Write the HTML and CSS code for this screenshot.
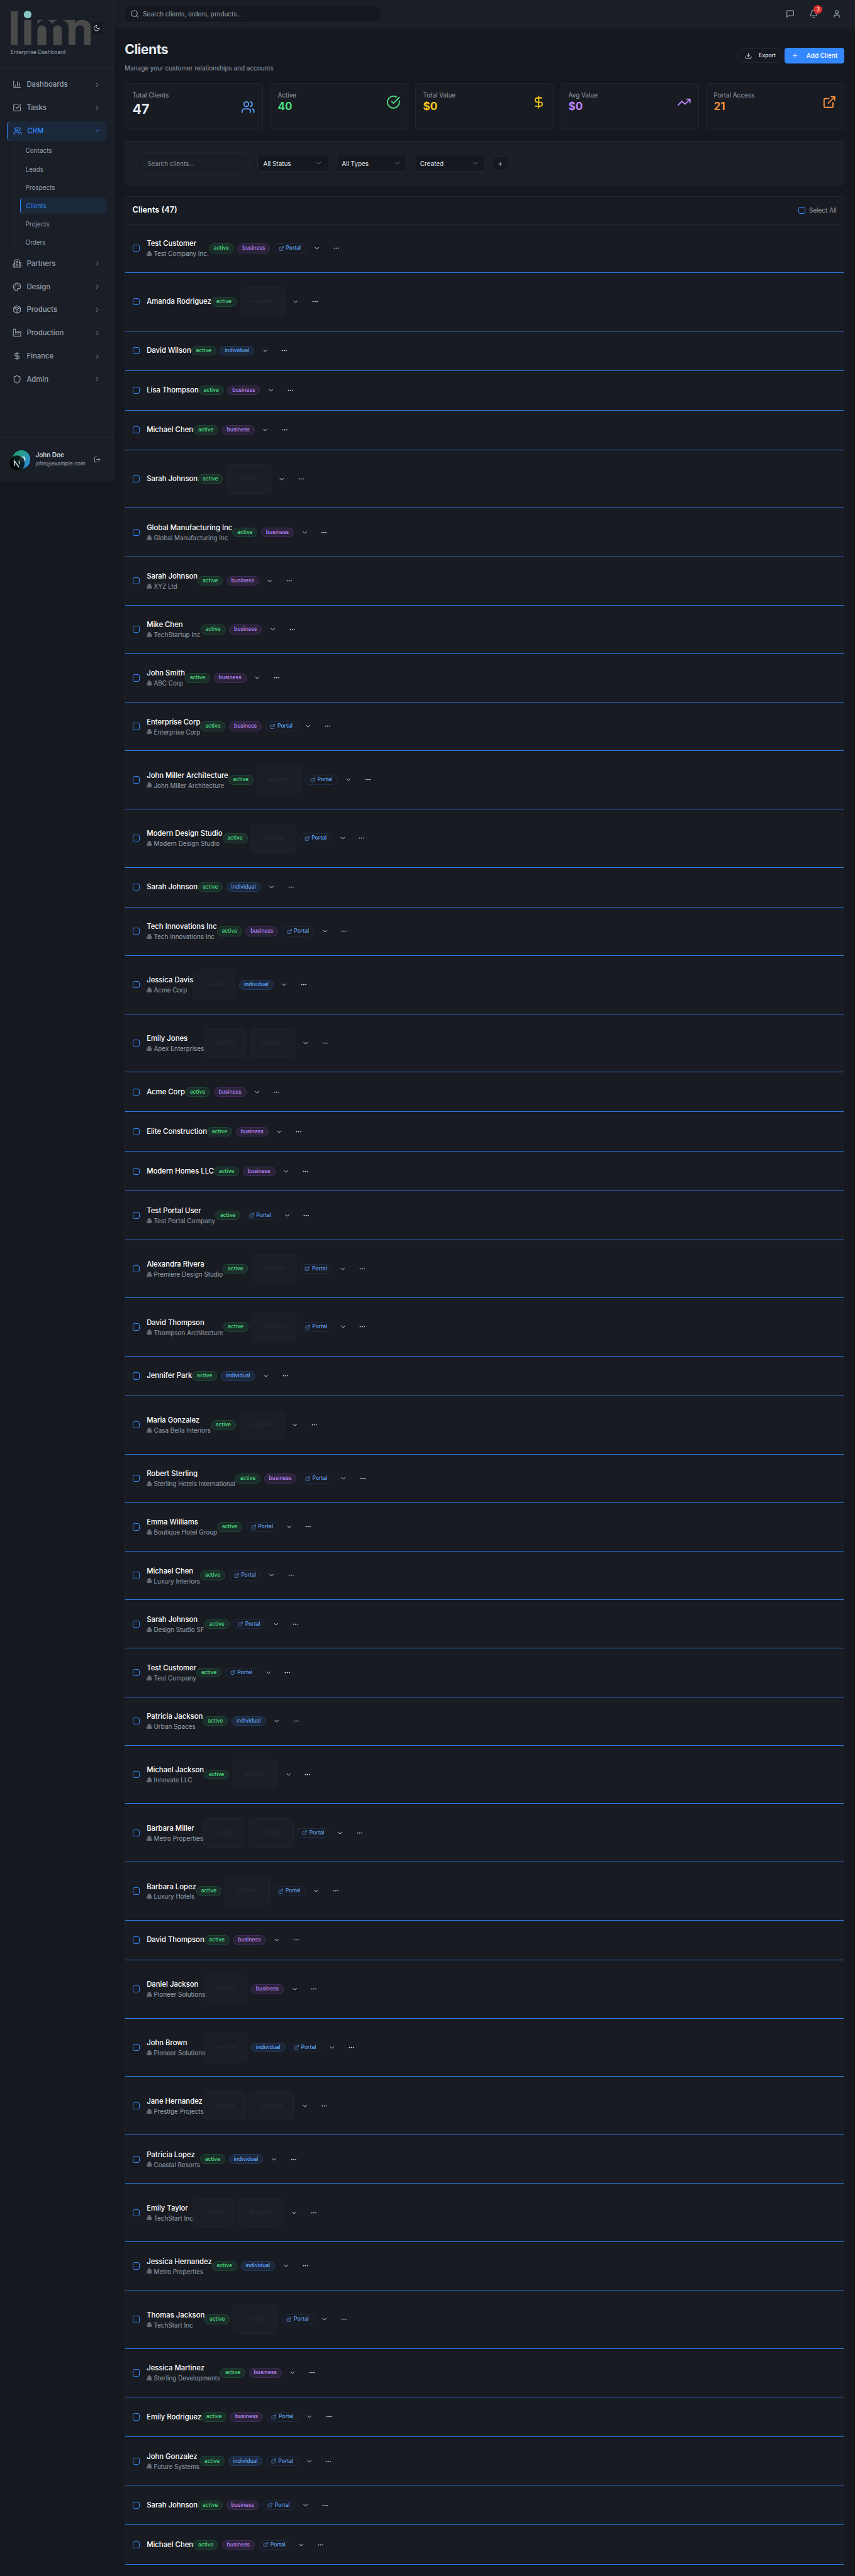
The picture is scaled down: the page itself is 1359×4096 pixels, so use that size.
FILE: index.html
```html
<!DOCTYPE html>
<html lang="en">
<head>
<meta charset="utf-8">
<title>Clients</title>
<link rel="stylesheet" href="styles.css">
</head>
<body>
<svg class="sprite" aria-hidden="true">
  <symbol id="chart" viewBox="0 0 24 24"><path d="M3 3v16a2 2 0 0 0 2 2h16M8 17v-3M13 17V5M18 17V9"/></symbol>
  <symbol id="tasks" viewBox="0 0 24 24"><path d="M21 10.5V19a2 2 0 0 1-2 2H5a2 2 0 0 1-2-2V5a2 2 0 0 1 2-2h12.5M9 11l3 3L22 4"/></symbol>
  <symbol id="users" viewBox="0 0 24 24"><path d="M16 21v-2a4 4 0 0 0-4-4H6a4 4 0 0 0-4 4v2M22 21v-2a4 4 0 0 0-3-3.87M16 3.13a4 4 0 0 1 0 7.75"/><circle cx="9" cy="7" r="4"/></symbol>
  <symbol id="building" viewBox="0 0 24 24"><path d="M6 22V4a2 2 0 0 1 2-2h8a2 2 0 0 1 2 2v18ZM6 12H4a2 2 0 0 0-2 2v6a2 2 0 0 0 2 2h2M18 9h2a2 2 0 0 1 2 2v9a2 2 0 0 1-2 2h-2M10 6h4M10 10h4M10 14h4M10 18h4"/></symbol>
  <symbol id="palette" viewBox="0 0 24 24"><path d="M12 2C6.5 2 2 6.5 2 12s4.500 10 10 10c.926 0 1.648-.746 1.648-1.688 0-.437-.18-.835-.437-1.125-.29-.289-.438-.652-.438-1.125a1.640 1.640 0 0 1 1.668-1.668h1.996c3.051 0 5.555-2.503 5.555-5.554C21.965 6.012 17.461 2 12 2z"/><circle cx="13.500" cy="6.500" r=".5"/><circle cx="17.500" cy="10.500" r=".5"/><circle cx="8.500" cy="7.500" r=".5"/><circle cx="6.500" cy="12.500" r=".5"/></symbol>
  <symbol id="box" viewBox="0 0 24 24"><path d="M11 21.730a2 2 0 0 0 2 0l7-4A2 2 0 0 0 21 16V8a2 2 0 0 0-1-1.730l-7-4a2 2 0 0 0-2 0l-7 4A2 2 0 0 0 3 8v8a2 2 0 0 0 1 1.730zM12 22V12M3.300 7 12 12l8.700-5M7.500 4.270l9 5.150"/></symbol>
  <symbol id="factory" viewBox="0 0 24 24"><path d="M2 20a2 2 0 0 0 2 2h16a2 2 0 0 0 2-2V8l-7 5V8l-7 5V4a2 2 0 0 0-2-2H4a2 2 0 0 0-2 2ZM17 18h1M12 18h1M7 18h1"/></symbol>
  <symbol id="dollar" viewBox="0 0 24 24"><path d="M12 2v20M17 5H9.500a3.500 3.500 0 0 0 0 7h5a3.500 3.500 0 0 1 0 7H6"/></symbol>
  <symbol id="shield" viewBox="0 0 24 24"><path d="M20 13c0 5-3.500 7.500-7.660 8.950a1 1 0 0 1-.67-.01C7.500 20.500 4 18 4 13V6a1 1 0 0 1 1-1c2 0 4.500-1.200 6.240-2.720a1.170 1.170 0 0 1 1.520 0C14.510 3.810 17 5 19 5a1 1 0 0 1 1 1z"/></symbol>
  <symbol id="right" viewBox="0 0 24 24"><path d="m9 18 6-6-6-6"/></symbol>
  <symbol id="down" viewBox="0 0 24 24"><path d="m6 9 6 6 6-6"/></symbol>
  <symbol id="moon" viewBox="0 0 24 24"><path d="M12 3a6 6 0 0 0 9 9 9 9 0 1 1-9-9Z"/></symbol>
  <symbol id="search" viewBox="0 0 24 24"><circle cx="11" cy="11" r="8"/><path d="m21 21-4.300-4.300"/></symbol>
  <symbol id="message" viewBox="0 0 24 24"><path d="M21 15a2 2 0 0 1-2 2H7l-4 4V5a2 2 0 0 1 2-2h14a2 2 0 0 1 2 2z"/></symbol>
  <symbol id="bell" viewBox="0 0 24 24"><path d="M10.268 21a2 2 0 0 0 3.464 0M3.262 15.326A1 1 0 0 0 4 17h16a1 1 0 0 0 .74-1.673C19.410 13.956 18 12.499 18 8A6 6 0 0 0 6 8c0 4.499-1.411 5.956-2.738 7.326"/></symbol>
  <symbol id="user" viewBox="0 0 24 24"><circle cx="12" cy="7" r="4"/><path d="M19 21v-2a4 4 0 0 0-4-4H9a4 4 0 0 0-4 4v2"/></symbol>
  <symbol id="download" viewBox="0 0 24 24"><path d="M21 15v4a2 2 0 0 1-2 2H5a2 2 0 0 1-2-2v-4M7 10l5 5 5-5M12 15V3"/></symbol>
  <symbol id="plus" viewBox="0 0 24 24"><path d="M5 12h14M12 5v14"/></symbol>
  <symbol id="check" viewBox="0 0 24 24"><path d="M21.801 10A10 10 0 1 1 17 3.335M9 11l3 3L22 4"/></symbol>
  <symbol id="trend" viewBox="0 0 24 24"><path d="M16 7h6v6M22 7l-8.500 8.500-5-5L2 17"/></symbol>
  <symbol id="external" viewBox="0 0 24 24"><path d="M15 3h6v6M10 14 21 3M18 13v6a2 2 0 0 1-2 2H5a2 2 0 0 1-2-2V8a2 2 0 0 1 2-2h6"/></symbol>
  <symbol id="arrow" viewBox="0 0 24 24"><path d="M12 5v14M19 12l-7 7-7-7"/></symbol>
  <symbol id="logout" viewBox="0 0 24 24"><path d="M9 21H5a2 2 0 0 1-2-2V5a2 2 0 0 1 2-2h4M16 17l5-5-5-5M21 12H9"/></symbol>
  <symbol id="dots" viewBox="0 0 24 24"><circle cx="12" cy="12" r="1"/><circle cx="19" cy="12" r="1"/><circle cx="5" cy="12" r="1"/></symbol>
</svg>
<div class="app">
  <aside class="sidebar">
    <div class="brand">
      <div class="brand-row">
        <svg class="logo" viewBox="42 42 540 231" preserveAspectRatio="none" aria-label="limn">
          <rect x="42" y="45" width="47" height="228"/><rect x="133" y="105" width="47" height="168"/>
          <circle class="logo-dot" cx="156" cy="68" r="26"/>
          <path d="M222 105H268Q240 108 222 135ZM286 105H360Q336 110 322 132Q308 110 286 105ZM222 273V170a30 30 0 0 1 60 0V273ZM328 273V170a29.500 30 0 0 1 59 0V273ZM386 105H476V128Q490 105 525 105C565 105 582 130 582 165V273H537V172Q537 140 507 140Q478 140 478 172V273H432V155Q430 112 386 105Z"/>
        </svg>
        <button class="theme"><svg class="icon i16"><use href="#moon"/></svg></button>
      </div>
      <div class="tagline">Enterprise Dashboard</div>
    </div>
    <nav class="nav">
      <a class="nav-item"><svg class="icon i20"><use href="#chart"/></svg><span>Dashboards</span><svg class="icon i16"><use href="#right"/></svg></a>
      <a class="nav-item"><svg class="icon i20"><use href="#tasks"/></svg><span>Tasks</span><svg class="icon i16"><use href="#right"/></svg></a>
      <div class="nav-group">
        <a class="nav-item nav-item--active"><svg class="icon i20"><use href="#users"/></svg><span>CRM</span><svg class="icon i16"><use href="#down"/></svg></a>
        <div class="subnav">
          <a class="sub-item">Contacts</a><a class="sub-item">Leads</a><a class="sub-item">Prospects</a><a class="sub-item sub-item--active">Clients</a><a class="sub-item">Projects</a><a class="sub-item">Orders</a>
        </div>
      </div>
      <a class="nav-item"><svg class="icon i20"><use href="#building"/></svg><span>Partners</span><svg class="icon i16"><use href="#right"/></svg></a>
      <a class="nav-item"><svg class="icon i20"><use href="#palette"/></svg><span>Design</span><svg class="icon i16"><use href="#right"/></svg></a>
      <a class="nav-item"><svg class="icon i20"><use href="#box"/></svg><span>Products</span><svg class="icon i16"><use href="#right"/></svg></a>
      <a class="nav-item"><svg class="icon i20"><use href="#factory"/></svg><span>Production</span><svg class="icon i16"><use href="#right"/></svg></a>
      <a class="nav-item"><svg class="icon i20"><use href="#dollar"/></svg><span>Finance</span><svg class="icon i16"><use href="#right"/></svg></a>
      <a class="nav-item"><svg class="icon i20"><use href="#shield"/></svg><span>Admin</span><svg class="icon i16"><use href="#right"/></svg></a>
    </nav>
    <div class="account">
      <div class="avatar">JD
        <svg class="dev-badge" viewBox="0 0 36 36"><circle cx="18" cy="18" r="17.500"/><path d="M12.500 23.500V12.500L23 26.500M23.200 12.500v7.500"/></svg>
      </div>
      <div class="who"><div class="who-name">John Doe</div><div class="who-mail">john@example.com</div></div>
      <svg class="icon i16"><use href="#logout"/></svg>
    </div>
  </aside>
  <div class="page">
    <header class="topbar">
      <div class="global-search"><svg class="icon i20"><use href="#search"/></svg><span>Search clients, orders, products...</span></div>
      <div class="top-actions">
        <svg class="icon i20"><use href="#message"/></svg>
        <div class="bell"><svg class="icon i20"><use href="#bell"/></svg><span class="count">3</span></div>
        <svg class="icon i20"><use href="#user"/></svg>
      </div>
    </header>
    <main class="main">
      <div class="heading">
        <div><h1>Clients</h1><p>Manage your customer relationships and accounts</p></div>
        <div class="heading-actions">
          <button class="btn btn--export"><svg class="icon i16"><use href="#download"/></svg>Export</button>
          <button class="btn btn--add"><svg class="icon i16"><use href="#plus"/></svg>Add Client</button>
        </div>
      </div>
      <section class="stats">
        <div class="stat stat--big"><div><div class="stat-label">Total Clients</div><div class="stat-value">47</div></div><svg class="icon i32 blue"><use href="#users"/></svg></div>
        <div class="stat green"><div><div class="stat-label">Active</div><div class="stat-value">40</div></div><svg class="icon i32"><use href="#check"/></svg></div>
        <div class="stat yellow"><div><div class="stat-label">Total Value</div><div class="stat-value">$0</div></div><svg class="icon i32"><use href="#dollar"/></svg></div>
        <div class="stat purple"><div><div class="stat-label">Avg Value</div><div class="stat-value">$0</div></div><svg class="icon i32"><use href="#trend"/></svg></div>
        <div class="stat orange"><div><div class="stat-label">Portal Access</div><div class="stat-value">21</div></div><svg class="icon i32"><use href="#external"/></svg></div>
      </section>
      <section class="filters">
        <div class="filter-search"><i class="ghost-dot"></i><span>Search clients...</span></div>
        <div class="select"><span>All Status</span><svg class="icon i16"><use href="#down"/></svg></div>
        <div class="select"><span>All Types</span><svg class="icon i16"><use href="#down"/></svg></div>
        <div class="select"><span>Created</span><svg class="icon i16"><use href="#down"/></svg></div>
        <button class="sort"><svg class="icon i12"><use href="#arrow"/></svg></button>
      </section>
      <section class="list">
        <div class="list-head"><h2>Clients (47)</h2><label><i class="checkbox"></i>Select All</label></div>
        <div class="row row--two"><i class="checkbox"></i><div class="info"><b>Test Customer</b><small><svg class="firm"><use href="#building"/></svg>Test Company Inc.</small></div><div class="tags"><span class="tag tag--active">active</span><span class="tag tag--business">business</span><span class="tag tag--portal"><svg class="icon i12"><use href="#external"/></svg>Portal</span></div><svg class="icon i16 act"><use href="#down"/></svg><svg class="icon i16 act"><use href="#dots"/></svg></div>
        <div class="row row--tall"><i class="checkbox"></i><div class="info"><b>Amanda Rodriguez</b></div><div class="tags"><span class="tag tag--active">active</span><span class="tag tag--plain">architect</span></div><svg class="icon i16 act"><use href="#down"/></svg><svg class="icon i16 act"><use href="#dots"/></svg></div>
        <div class="row"><i class="checkbox"></i><div class="info"><b>David Wilson</b></div><div class="tags"><span class="tag tag--active">active</span><span class="tag tag--individual">individual</span></div><svg class="icon i16 act"><use href="#down"/></svg><svg class="icon i16 act"><use href="#dots"/></svg></div>
        <div class="row"><i class="checkbox"></i><div class="info"><b>Lisa Thompson</b></div><div class="tags"><span class="tag tag--active">active</span><span class="tag tag--business">business</span></div><svg class="icon i16 act"><use href="#down"/></svg><svg class="icon i16 act"><use href="#dots"/></svg></div>
        <div class="row"><i class="checkbox"></i><div class="info"><b>Michael Chen</b></div><div class="tags"><span class="tag tag--active">active</span><span class="tag tag--business">business</span></div><svg class="icon i16 act"><use href="#down"/></svg><svg class="icon i16 act"><use href="#dots"/></svg></div>
        <div class="row row--tall"><i class="checkbox"></i><div class="info"><b>Sarah Johnson</b></div><div class="tags"><span class="tag tag--active">active</span><span class="tag tag--plain">designer</span></div><svg class="icon i16 act"><use href="#down"/></svg><svg class="icon i16 act"><use href="#dots"/></svg></div>
        <div class="row row--two"><i class="checkbox"></i><div class="info"><b>Global Manufacturing Inc</b><small><svg class="firm"><use href="#building"/></svg>Global Manufacturing Inc</small></div><div class="tags"><span class="tag tag--active">active</span><span class="tag tag--business">business</span></div><svg class="icon i16 act"><use href="#down"/></svg><svg class="icon i16 act"><use href="#dots"/></svg></div>
        <div class="row row--two"><i class="checkbox"></i><div class="info"><b>Sarah Johnson</b><small><svg class="firm"><use href="#building"/></svg>XYZ Ltd</small></div><div class="tags"><span class="tag tag--active">active</span><span class="tag tag--business">business</span></div><svg class="icon i16 act"><use href="#down"/></svg><svg class="icon i16 act"><use href="#dots"/></svg></div>
        <div class="row row--two"><i class="checkbox"></i><div class="info"><b>Mike Chen</b><small><svg class="firm"><use href="#building"/></svg>TechStartup Inc</small></div><div class="tags"><span class="tag tag--active">active</span><span class="tag tag--business">business</span></div><svg class="icon i16 act"><use href="#down"/></svg><svg class="icon i16 act"><use href="#dots"/></svg></div>
        <div class="row row--two"><i class="checkbox"></i><div class="info"><b>John Smith</b><small><svg class="firm"><use href="#building"/></svg>ABC Corp</small></div><div class="tags"><span class="tag tag--active">active</span><span class="tag tag--business">business</span></div><svg class="icon i16 act"><use href="#down"/></svg><svg class="icon i16 act"><use href="#dots"/></svg></div>
        <div class="row row--two"><i class="checkbox"></i><div class="info"><b>Enterprise Corp</b><small><svg class="firm"><use href="#building"/></svg>Enterprise Corp</small></div><div class="tags"><span class="tag tag--active">active</span><span class="tag tag--business">business</span><span class="tag tag--portal"><svg class="icon i12"><use href="#external"/></svg>Portal</span></div><svg class="icon i16 act"><use href="#down"/></svg><svg class="icon i16 act"><use href="#dots"/></svg></div>
        <div class="row row--tall"><i class="checkbox"></i><div class="info"><b>John Miller Architecture</b><small><svg class="firm"><use href="#building"/></svg>John Miller Architecture</small></div><div class="tags"><span class="tag tag--active">active</span><span class="tag tag--plain">architect</span><span class="tag tag--portal"><svg class="icon i12"><use href="#external"/></svg>Portal</span></div><svg class="icon i16 act"><use href="#down"/></svg><svg class="icon i16 act"><use href="#dots"/></svg></div>
        <div class="row row--tall"><i class="checkbox"></i><div class="info"><b>Modern Design Studio</b><small><svg class="firm"><use href="#building"/></svg>Modern Design Studio</small></div><div class="tags"><span class="tag tag--active">active</span><span class="tag tag--plain">designer</span><span class="tag tag--portal"><svg class="icon i12"><use href="#external"/></svg>Portal</span></div><svg class="icon i16 act"><use href="#down"/></svg><svg class="icon i16 act"><use href="#dots"/></svg></div>
        <div class="row"><i class="checkbox"></i><div class="info"><b>Sarah Johnson</b></div><div class="tags"><span class="tag tag--active">active</span><span class="tag tag--individual">individual</span></div><svg class="icon i16 act"><use href="#down"/></svg><svg class="icon i16 act"><use href="#dots"/></svg></div>
        <div class="row row--two"><i class="checkbox"></i><div class="info"><b>Tech Innovations Inc</b><small><svg class="firm"><use href="#building"/></svg>Tech Innovations Inc</small></div><div class="tags"><span class="tag tag--active">active</span><span class="tag tag--business">business</span><span class="tag tag--portal"><svg class="icon i12"><use href="#external"/></svg>Portal</span></div><svg class="icon i16 act"><use href="#down"/></svg><svg class="icon i16 act"><use href="#dots"/></svg></div>
        <div class="row row--tall"><i class="checkbox"></i><div class="info"><b>Jessica Davis</b><small><svg class="firm"><use href="#building"/></svg>Acme Corp</small></div><div class="tags"><span class="tag tag--plain">inactive</span><span class="tag tag--individual">individual</span></div><svg class="icon i16 act"><use href="#down"/></svg><svg class="icon i16 act"><use href="#dots"/></svg></div>
        <div class="row row--tall"><i class="checkbox"></i><div class="info"><b>Emily Jones</b><small><svg class="firm"><use href="#building"/></svg>Apex Enterprises</small></div><div class="tags"><span class="tag tag--plain">inactive</span><span class="tag tag--plain">architect</span></div><svg class="icon i16 act"><use href="#down"/></svg><svg class="icon i16 act"><use href="#dots"/></svg></div>
        <div class="row"><i class="checkbox"></i><div class="info"><b>Acme Corp</b></div><div class="tags"><span class="tag tag--active">active</span><span class="tag tag--business">business</span></div><svg class="icon i16 act"><use href="#down"/></svg><svg class="icon i16 act"><use href="#dots"/></svg></div>
        <div class="row"><i class="checkbox"></i><div class="info"><b>Elite Construction</b></div><div class="tags"><span class="tag tag--active">active</span><span class="tag tag--business">business</span></div><svg class="icon i16 act"><use href="#down"/></svg><svg class="icon i16 act"><use href="#dots"/></svg></div>
        <div class="row"><i class="checkbox"></i><div class="info"><b>Modern Homes LLC</b></div><div class="tags"><span class="tag tag--active">active</span><span class="tag tag--business">business</span></div><svg class="icon i16 act"><use href="#down"/></svg><svg class="icon i16 act"><use href="#dots"/></svg></div>
        <div class="row row--two"><i class="checkbox"></i><div class="info"><b>Test Portal User</b><small><svg class="firm"><use href="#building"/></svg>Test Portal Company</small></div><div class="tags"><span class="tag tag--active">active</span><span class="tag tag--portal"><svg class="icon i12"><use href="#external"/></svg>Portal</span></div><svg class="icon i16 act"><use href="#down"/></svg><svg class="icon i16 act"><use href="#dots"/></svg></div>
        <div class="row row--tall"><i class="checkbox"></i><div class="info"><b>Alexandra Rivera</b><small><svg class="firm"><use href="#building"/></svg>Premiere Design Studio</small></div><div class="tags"><span class="tag tag--active">active</span><span class="tag tag--plain">designer</span><span class="tag tag--portal"><svg class="icon i12"><use href="#external"/></svg>Portal</span></div><svg class="icon i16 act"><use href="#down"/></svg><svg class="icon i16 act"><use href="#dots"/></svg></div>
        <div class="row row--tall"><i class="checkbox"></i><div class="info"><b>David Thompson</b><small><svg class="firm"><use href="#building"/></svg>Thompson Architecture</small></div><div class="tags"><span class="tag tag--active">active</span><span class="tag tag--plain">architect</span><span class="tag tag--portal"><svg class="icon i12"><use href="#external"/></svg>Portal</span></div><svg class="icon i16 act"><use href="#down"/></svg><svg class="icon i16 act"><use href="#dots"/></svg></div>
        <div class="row"><i class="checkbox"></i><div class="info"><b>Jennifer Park</b></div><div class="tags"><span class="tag tag--active">active</span><span class="tag tag--individual">individual</span></div><svg class="icon i16 act"><use href="#down"/></svg><svg class="icon i16 act"><use href="#dots"/></svg></div>
        <div class="row row--tall"><i class="checkbox"></i><div class="info"><b>Maria Gonzalez</b><small><svg class="firm"><use href="#building"/></svg>Casa Bella Interiors</small></div><div class="tags"><span class="tag tag--active">active</span><span class="tag tag--plain">designer</span></div><svg class="icon i16 act"><use href="#down"/></svg><svg class="icon i16 act"><use href="#dots"/></svg></div>
        <div class="row row--two"><i class="checkbox"></i><div class="info"><b>Robert Sterling</b><small><svg class="firm"><use href="#building"/></svg>Sterling Hotels International</small></div><div class="tags"><span class="tag tag--active">active</span><span class="tag tag--business">business</span><span class="tag tag--portal"><svg class="icon i12"><use href="#external"/></svg>Portal</span></div><svg class="icon i16 act"><use href="#down"/></svg><svg class="icon i16 act"><use href="#dots"/></svg></div>
        <div class="row row--two"><i class="checkbox"></i><div class="info"><b>Emma Williams</b><small><svg class="firm"><use href="#building"/></svg>Boutique Hotel Group</small></div><div class="tags"><span class="tag tag--active">active</span><span class="tag tag--portal"><svg class="icon i12"><use href="#external"/></svg>Portal</span></div><svg class="icon i16 act"><use href="#down"/></svg><svg class="icon i16 act"><use href="#dots"/></svg></div>
        <div class="row row--two"><i class="checkbox"></i><div class="info"><b>Michael Chen</b><small><svg class="firm"><use href="#building"/></svg>Luxury Interiors</small></div><div class="tags"><span class="tag tag--active">active</span><span class="tag tag--portal"><svg class="icon i12"><use href="#external"/></svg>Portal</span></div><svg class="icon i16 act"><use href="#down"/></svg><svg class="icon i16 act"><use href="#dots"/></svg></div>
        <div class="row row--two"><i class="checkbox"></i><div class="info"><b>Sarah Johnson</b><small><svg class="firm"><use href="#building"/></svg>Design Studio SF</small></div><div class="tags"><span class="tag tag--active">active</span><span class="tag tag--portal"><svg class="icon i12"><use href="#external"/></svg>Portal</span></div><svg class="icon i16 act"><use href="#down"/></svg><svg class="icon i16 act"><use href="#dots"/></svg></div>
        <div class="row row--two"><i class="checkbox"></i><div class="info"><b>Test Customer</b><small><svg class="firm"><use href="#building"/></svg>Test Company</small></div><div class="tags"><span class="tag tag--active">active</span><span class="tag tag--portal"><svg class="icon i12"><use href="#external"/></svg>Portal</span></div><svg class="icon i16 act"><use href="#down"/></svg><svg class="icon i16 act"><use href="#dots"/></svg></div>
        <div class="row row--two"><i class="checkbox"></i><div class="info"><b>Patricia Jackson</b><small><svg class="firm"><use href="#building"/></svg>Urban Spaces</small></div><div class="tags"><span class="tag tag--active">active</span><span class="tag tag--individual">individual</span></div><svg class="icon i16 act"><use href="#down"/></svg><svg class="icon i16 act"><use href="#dots"/></svg></div>
        <div class="row row--tall"><i class="checkbox"></i><div class="info"><b>Michael Jackson</b><small><svg class="firm"><use href="#building"/></svg>Innovate LLC</small></div><div class="tags"><span class="tag tag--active">active</span><span class="tag tag--plain">architect</span></div><svg class="icon i16 act"><use href="#down"/></svg><svg class="icon i16 act"><use href="#dots"/></svg></div>
        <div class="row row--tall"><i class="checkbox"></i><div class="info"><b>Barbara Miller</b><small><svg class="firm"><use href="#building"/></svg>Metro Properties</small></div><div class="tags"><span class="tag tag--plain">inactive</span><span class="tag tag--plain">designer</span><span class="tag tag--portal"><svg class="icon i12"><use href="#external"/></svg>Portal</span></div><svg class="icon i16 act"><use href="#down"/></svg><svg class="icon i16 act"><use href="#dots"/></svg></div>
        <div class="row row--tall"><i class="checkbox"></i><div class="info"><b>Barbara Lopez</b><small><svg class="firm"><use href="#building"/></svg>Luxury Hotels</small></div><div class="tags"><span class="tag tag--active">active</span><span class="tag tag--plain">architect</span><span class="tag tag--portal"><svg class="icon i12"><use href="#external"/></svg>Portal</span></div><svg class="icon i16 act"><use href="#down"/></svg><svg class="icon i16 act"><use href="#dots"/></svg></div>
        <div class="row"><i class="checkbox"></i><div class="info"><b>David Thompson</b></div><div class="tags"><span class="tag tag--active">active</span><span class="tag tag--business">business</span></div><svg class="icon i16 act"><use href="#down"/></svg><svg class="icon i16 act"><use href="#dots"/></svg></div>
        <div class="row row--tall"><i class="checkbox"></i><div class="info"><b>Daniel Jackson</b><small><svg class="firm"><use href="#building"/></svg>Pioneer Solutions</small></div><div class="tags"><span class="tag tag--plain">inactive</span><span class="tag tag--business">business</span></div><svg class="icon i16 act"><use href="#down"/></svg><svg class="icon i16 act"><use href="#dots"/></svg></div>
        <div class="row row--tall"><i class="checkbox"></i><div class="info"><b>John Brown</b><small><svg class="firm"><use href="#building"/></svg>Pioneer Solutions</small></div><div class="tags"><span class="tag tag--plain">inactive</span><span class="tag tag--individual">individual</span><span class="tag tag--portal"><svg class="icon i12"><use href="#external"/></svg>Portal</span></div><svg class="icon i16 act"><use href="#down"/></svg><svg class="icon i16 act"><use href="#dots"/></svg></div>
        <div class="row row--tall"><i class="checkbox"></i><div class="info"><b>Jane Hernandez</b><small><svg class="firm"><use href="#building"/></svg>Prestige Projects</small></div><div class="tags"><span class="tag tag--plain">inactive</span><span class="tag tag--plain">architect</span></div><svg class="icon i16 act"><use href="#down"/></svg><svg class="icon i16 act"><use href="#dots"/></svg></div>
        <div class="row row--two"><i class="checkbox"></i><div class="info"><b>Patricia Lopez</b><small><svg class="firm"><use href="#building"/></svg>Coastal Resorts</small></div><div class="tags"><span class="tag tag--active">active</span><span class="tag tag--individual">individual</span></div><svg class="icon i16 act"><use href="#down"/></svg><svg class="icon i16 act"><use href="#dots"/></svg></div>
        <div class="row row--tall"><i class="checkbox"></i><div class="info"><b>Emily Taylor</b><small><svg class="firm"><use href="#building"/></svg>TechStart Inc</small></div><div class="tags"><span class="tag tag--plain">inactive</span><span class="tag tag--plain">designer</span></div><svg class="icon i16 act"><use href="#down"/></svg><svg class="icon i16 act"><use href="#dots"/></svg></div>
        <div class="row row--two"><i class="checkbox"></i><div class="info"><b>Jessica Hernandez</b><small><svg class="firm"><use href="#building"/></svg>Metro Properties</small></div><div class="tags"><span class="tag tag--active">active</span><span class="tag tag--individual">individual</span></div><svg class="icon i16 act"><use href="#down"/></svg><svg class="icon i16 act"><use href="#dots"/></svg></div>
        <div class="row row--tall"><i class="checkbox"></i><div class="info"><b>Thomas Jackson</b><small><svg class="firm"><use href="#building"/></svg>TechStart Inc</small></div><div class="tags"><span class="tag tag--active">active</span><span class="tag tag--plain">architect</span><span class="tag tag--portal"><svg class="icon i12"><use href="#external"/></svg>Portal</span></div><svg class="icon i16 act"><use href="#down"/></svg><svg class="icon i16 act"><use href="#dots"/></svg></div>
        <div class="row row--two"><i class="checkbox"></i><div class="info"><b>Jessica Martinez</b><small><svg class="firm"><use href="#building"/></svg>Sterling Developments</small></div><div class="tags"><span class="tag tag--active">active</span><span class="tag tag--business">business</span></div><svg class="icon i16 act"><use href="#down"/></svg><svg class="icon i16 act"><use href="#dots"/></svg></div>
        <div class="row"><i class="checkbox"></i><div class="info"><b>Emily Rodriguez</b></div><div class="tags"><span class="tag tag--active">active</span><span class="tag tag--business">business</span><span class="tag tag--portal"><svg class="icon i12"><use href="#external"/></svg>Portal</span></div><svg class="icon i16 act"><use href="#down"/></svg><svg class="icon i16 act"><use href="#dots"/></svg></div>
        <div class="row row--two"><i class="checkbox"></i><div class="info"><b>John Gonzalez</b><small><svg class="firm"><use href="#building"/></svg>Future Systems</small></div><div class="tags"><span class="tag tag--active">active</span><span class="tag tag--individual">individual</span><span class="tag tag--portal"><svg class="icon i12"><use href="#external"/></svg>Portal</span></div><svg class="icon i16 act"><use href="#down"/></svg><svg class="icon i16 act"><use href="#dots"/></svg></div>
        <div class="row"><i class="checkbox"></i><div class="info"><b>Sarah Johnson</b></div><div class="tags"><span class="tag tag--active">active</span><span class="tag tag--business">business</span><span class="tag tag--portal"><svg class="icon i12"><use href="#external"/></svg>Portal</span></div><svg class="icon i16 act"><use href="#down"/></svg><svg class="icon i16 act"><use href="#dots"/></svg></div>
        <div class="row"><i class="checkbox"></i><div class="info"><b>Michael Chen</b></div><div class="tags"><span class="tag tag--active">active</span><span class="tag tag--business">business</span><span class="tag tag--portal"><svg class="icon i12"><use href="#external"/></svg>Portal</span></div><svg class="icon i16 act"><use href="#down"/></svg><svg class="icon i16 act"><use href="#dots"/></svg></div>
      </section>
    </main>
  </div>
</div>
</body>
</html>
```
FILE: styles.css
```css
:root {
  --bg: #15181f;
  --card: #181b22;
  --panel: #1a1e26;
  --line: #22272f;
  --muted: #98a1ae;
  --text: #e2e8f0;
  --accent: #3388ff;
}
html { font-size: 7.08px; }
* { box-sizing: border-box; }
body {
  margin: 0;
  background: var(--bg);
  color: var(--text);
  font: 400 1.4rem/2rem Inter, "Liberation Sans", sans-serif;
}
button { font: inherit; color: inherit; margin: 0; padding: 0; background: var(--bg); border: 1px solid var(--line); }
h1, h2, p { margin: 0; }
.sprite { display: none; }
.icon { fill: none; stroke: currentColor; stroke-width: 2; stroke-linecap: round; stroke-linejoin: round; flex: none; overflow: visible; }
.i12 { width: 1.2rem; height: 1.2rem; }
.i16 { width: 1.6rem; height: 1.6rem; }
.i20 { width: 2rem; height: 2rem; }
.i32 { width: 3.2rem; height: 3.2rem; }
.app { display: flex; align-items: flex-start; height: 4096px; overflow: hidden; }

/* Sidebar */
.sidebar { width: 25.6rem; height: 108rem; flex: none; display: flex; flex-direction: column; background: var(--panel); border-right: 1px solid var(--line); }
.brand { height: 15.2rem; padding: 2.4rem 2.4rem 0; border-bottom: 1px solid var(--line); }
.brand-row { display: flex; align-items: center; height: 7.7rem; }
.logo { width: 18rem; height: 7.7rem; fill: #4a4a4a; flex: none; }
.logo-dot { fill: #88c5c2; }
.theme { display: flex; align-items: center; justify-content: center; width: 2.65rem; height: 3.5rem; margin-left: .05rem; border-radius: .6rem; flex: none; }
.tagline { margin-top: .8rem; font-size: 1.2rem; line-height: 1.8rem; color: var(--muted); }
.nav { flex: 1; display: flex; flex-direction: column; gap: .8rem; padding: 1.6rem 1.6rem 0; }
.nav-item { display: flex; align-items: center; gap: 1.2rem; height: 4.4rem; padding: 0 1.2rem; border-radius: .8rem; font-size: 1.6rem; font-weight: 500; color: var(--muted); }
.nav-item span { flex: 1; }
.nav-item--active { color: var(--accent); background: #1b283a; border-left: .2rem solid var(--accent); }
.subnav { display: flex; flex-direction: column; gap: .4rem; margin: .4rem 0 0 1.6rem; padding-left: 1.2rem; border-left: 1px solid var(--line); }
.sub-item { height: 3.7rem; line-height: 3.7rem; padding-left: 1.2rem; border-radius: .6rem; color: var(--muted); }
.sub-item--active { color: var(--accent); background: #1b283a; border-left: .2rem solid var(--accent); }
.account { display: flex; align-items: center; height: 9.8rem; padding: 0 2.8rem; border-top: 1px solid var(--line); }
.avatar { position: relative; width: 4rem; height: 4rem; border-radius: 50%; background: linear-gradient(135deg, #1fa55c, #2f8bf0); color: #fff; font-weight: 600; line-height: 4rem; text-align: center; flex: none; }
.dev-badge { position: absolute; left: -.8rem; top: 1.1rem; width: 3.6rem; height: 3.6rem; border-radius: 50%; }
.dev-badge circle { fill: rgba(0, 0, 0, .8); stroke: #3a3c40; }
.dev-badge path { fill: none; stroke: #fff; stroke-width: 1.8; }
.who { flex: 1; margin-left: 1.2rem; }
.who-name { font-weight: 500; line-height: 1.9rem; }
.who-mail { font-size: 1.2rem; line-height: 1.8rem; color: var(--muted); }
.account > .icon { color: var(--muted); margin-right: .05rem; }

/* Top bar */
.page { flex: 1; min-width: 0; }
.topbar { display: flex; align-items: center; justify-content: space-between; height: 6.4rem; padding: 0 3.1rem 0 2.4rem; background: var(--panel); border-bottom: 1px solid #202a36; }
.global-search { display: flex; align-items: center; gap: .85rem; width: 57.6rem; height: 3.8rem; padding: 0 1.1rem; background: var(--bg); border: 1px solid #1f252f; border-radius: .8rem; color: var(--muted); }
.top-actions { display: flex; gap: 3.2rem; color: var(--muted); }
.bell { position: relative; height: 2rem; }
.bell .icon { display: block; }
.count { position: absolute; left: 1rem; top: -1rem; width: 2rem; height: 2rem; border-radius: 50%; background: #d32f2f; color: #fff; font-size: 1.2rem; line-height: 2rem; text-align: center; }

/* Page heading */
.main { padding: 0 2.4rem; }
.heading { display: flex; justify-content: space-between; height: 12.2rem; }
h1 { padding-top: 2.5rem; font-size: 3rem; line-height: 4.5rem; font-weight: 700; letter-spacing: -.025em; }
.heading p { margin-top: .85rem; color: var(--muted); }
.heading-actions { display: flex; align-items: center; gap: .8rem; height: 3.6rem; margin-top: 4.3rem; }
.btn { display: flex; align-items: center; border-radius: .6rem; white-space: nowrap; }
.btn--export { width: 9.5rem; height: 3.2rem; padding-left: 1.2rem; gap: 1.6rem; font-size: 1.2rem; font-weight: 500; }
.btn--add { width: 13.4rem; height: 3.6rem; padding-left: 1.6rem; gap: 1.7rem; font-weight: 500; color: #fff; background: var(--accent); border: 0; box-shadow: 0 1px 2px rgba(0, 0, 0, .4); }

/* Stat cards */
.stats { display: grid; grid-template-columns: repeat(5, 1fr); gap: 1.6rem; }
.stat { display: flex; justify-content: space-between; align-items: flex-start; height: 10.7rem; padding: 1.6rem; background: var(--card); border: 1px solid var(--line); border-radius: .8rem; }
.stat-label { color: var(--muted); }
.stat-value { font-size: 2.4rem; line-height: 3.2rem; font-weight: 700; }
.stat .icon { margin-top: 1rem; }
.stat--big .stat-value { font-size: 3rem; line-height: 4.5rem; }
.stat--big .icon { margin-top: 2.1rem; }
.blue { color: #59a1fb; }
.green { color: #4ade80; }
.yellow { color: #facc15; }
.purple { color: #c084fc; }
.orange { color: #fb923c; }

/* Filters */
.filters { display: flex; align-items: center; gap: 1.65rem; height: 10rem; margin-top: 2.4rem; padding: 0 2.4rem; background: var(--panel); border: 1px solid var(--line); border-radius: .8rem; }
.filter-search { display: flex; align-items: center; width: 25.6rem; height: 5rem; padding-left: 1.3rem; border: 1px solid #20252d; border-radius: .8rem; color: #868e9a; }
.ghost-dot { width: 1.1rem; height: 1.2rem; border: 1px solid #22272f; border-radius: 50%; }
.select { display: flex; align-items: center; justify-content: space-between; width: 15.95rem; height: 3.8rem; padding: 0 1.2rem; background: var(--bg); border: 1px solid var(--line); border-radius: .6rem; }
.select .icon { color: #7c8490; }
.sort { display: flex; align-items: center; justify-content: center; width: 3.55rem; height: 3.2rem; border-radius: .6rem; }

/* Client list */
.list { margin-top: 2.4rem; background: var(--card); border: 1px solid var(--line); border-radius: .8rem .8rem 0 0; border-bottom: 0; }
.list-head { display: flex; align-items: center; justify-content: space-between; height: 6.15rem; padding: 0 1.6rem; border-bottom: 1px solid var(--line); }
.list-head h2 { font-size: 1.8rem; line-height: 2.4rem; font-weight: 600; color: #fff; }
.list-head label { display: flex; align-items: center; gap: .8rem; color: var(--muted); }
.checkbox { width: 1.6rem; height: 1.6rem; border: 1px solid var(--accent); border-radius: .4rem; flex: none; }
.row { display: flex; align-items: center; height: 8.9rem; padding: 0 1.6rem; border-bottom: 1px solid #2f7be5; }
.row--two { height: 10.9rem; }
.row--tall { height: 13.1rem; }
.info { margin-left: 1.6rem; white-space: nowrap; }
.info b { display: block; font-size: 1.6rem; line-height: 2.4rem; font-weight: 500; color: #fff; }
.info small { display: flex; align-items: center; gap: .4rem; font-size: 1.4rem; line-height: 2rem; color: var(--muted); }
.firm { width: 1.2rem; height: 1.2rem; fill: #555c68; stroke: #7b8390; stroke-width: 2; flex: none; }
.tags { display: flex; align-items: center; gap: .8rem; margin-right: .85rem; }
.tag { display: flex; align-items: center; gap: .45rem; height: 2.2rem; padding: 0 calc(1.05rem - 1px + .05rem); border: 1px solid; border-radius: 1.1rem; font-size: 1.2rem; line-height: 1.6rem; font-weight: 500; }
.tag--active { color: #4ade80; background: #1b2d2a; border-color: #1d4a33; }
.tag--business { color: #c084fc; background: #292338; border-color: #432b60; }
.tag--individual { color: #60a5fa; background: #1c273a; border-color: #213c65; }
.tag--portal { color: #60a5fa; background: transparent; border-color: #1d2d47; }
.tag--plain { height: 6.55rem; padding: 0 calc(2.5rem - 1px); color: #252a33; background: #1a1e26; border-color: #1f242c; border-radius: .8rem; }
.act { margin: 0 1.38rem; color: var(--text); }
.tags + .act { margin-left: .8rem; }
```
